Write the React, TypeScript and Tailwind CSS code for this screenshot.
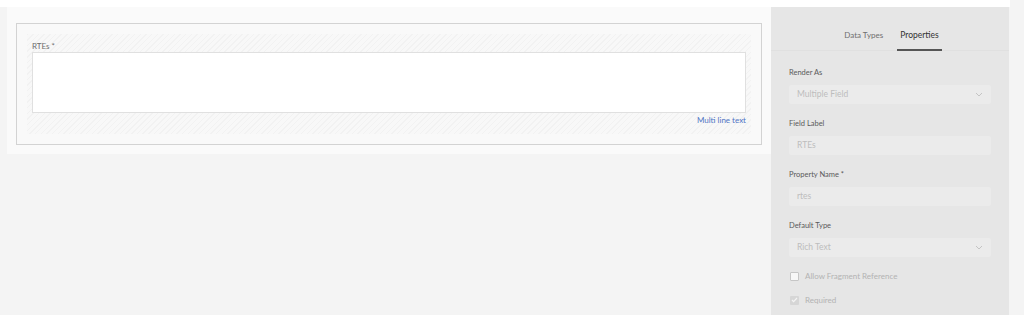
import React from 'react';

const font = { fontFamily: 'Lato, "Open Sans", sans-serif' };

function Chevron() {
  return (
    <svg width="8" height="5" viewBox="0 0 8 5" className="shrink-0">
      <path d="M1 1l3 3 3-3" fill="none" stroke="#c4c4c4" strokeWidth="1" />
    </svg>
  );
}

function Field({ label, value, select }: { label: string; value: string; select?: boolean }) {
  return (
    <div className="flex flex-col">
      <div className="h-[12px] text-[7.5px] leading-[12px] text-[#5a5a5a]">{label}</div>
      <div className="mt-[6px] flex h-[19px] items-center justify-between rounded-[2px] bg-[#ebebeb] pl-[8px] pr-[8px]">
        <span className="text-[8.5px] text-[#bdbdbd]">{value}</span>
        {select && <Chevron />}
      </div>
    </div>
  );
}

function Check({ label, checked }: { label: string; checked?: boolean }) {
  return (
    <div className="flex h-[12px] items-center gap-[6px] pl-[1px]">
      {checked ? (
        <div className="flex h-[9px] w-[9px] items-center justify-center rounded-[1px] bg-[#d6d6d6]">
          <svg width="7" height="6" viewBox="0 0 7 6">
            <path d="M1 3l1.6 1.6L6 1" fill="none" stroke="#f4f4f4" strokeWidth="1.2" />
          </svg>
        </div>
      ) : (
        <div className="h-[9px] w-[9px] rounded-[1px] border border-[#c6c6c6] bg-[#f7f7f7]" />
      )}
      <span className="text-[8px] text-[#b3b3b3]">{label}</span>
    </div>
  );
}

export default function App() {
  return (
    <div className="flex h-[315px] w-[1024px] overflow-hidden bg-[#f4f4f4]" style={font}>
      <div className="flex w-[1010px] shrink-0 flex-col">
        <div className="h-[7px] shrink-0 bg-white" />
        <div className="flex min-h-0 flex-1">
          <div className="w-[7px] shrink-0" />
          <div className="w-[764px] shrink-0">
            <div className="bg-[#fafafa] pb-[9px] pl-[9px] pr-[9px] pt-[16px]">
              <div className="border border-[#d3d3d3] bg-[#f9f9f9] p-[10px]">
                <div className="bg-[repeating-linear-gradient(135deg,#f2f2f2_0px,#f2f2f2_1px,#f8f8f8_1px,#f8f8f8_4px)] px-[5px] pb-[8px] pt-[7px]">
                  <div className="h-[11px] text-[8px] leading-[11px] text-[#6e6e6e]">RTEs *</div>
                  <div className="h-[61px] border border-[#e0e0e0] bg-white" />
                  <div className="mt-[1px] text-right text-[8px] leading-[12px] text-[#4f74c4]">Multi line text</div>
                </div>
              </div>
            </div>
          </div>
          <div className="w-[238px] shrink-0 overflow-hidden bg-[#e6e6e6]">
            <div className="flex h-[44px] justify-center gap-[14px] border-b border-[#e0e0e0] pl-[6px]">
              <div className="flex items-center pt-[13px] text-[8px] text-[#6f6f6f]">Data Types</div>
              <div className="relative flex items-center px-[3px] pt-[13px] text-[8.5px] text-[#333]">
                Properties
                <div className="absolute bottom-[-1px] left-0 right-0 h-[2px] bg-[#555]" />
              </div>
            </div>
            <div className="flex flex-col gap-[14px] pl-[18px] pr-[18px] pt-[16px]">
              <Field label="Render As" value="Multiple Field" select />
              <Field label="Field Label" value="RTEs" />
              <Field label="Property Name *" value="rtes" />
              <Field label="Default Type" value="Rich Text" select />
            </div>
            <div className="flex flex-col gap-[12px] pl-[18px] pt-[13px]">
              <Check label="Allow Fragment Reference" />
              <Check label="Required" checked />
            </div>
          </div>
        </div>
      </div>
    </div>
  );
}
